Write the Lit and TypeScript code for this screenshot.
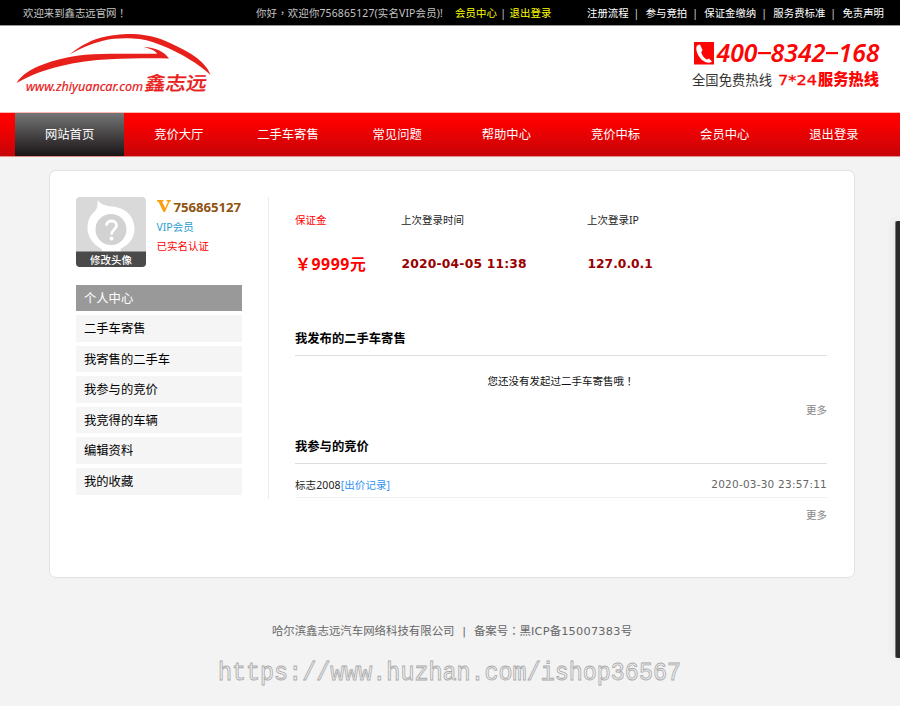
import { LitElement, html, css } from "lit";
import { customElement } from "lit/decorators.js";
import { classMap } from "lit/directives/class-map.js";

const NAV = ["网站首页", "竞价大厅", "二手车寄售", "常见问题", "帮助中心", "竞价中标", "会员中心", "退出登录"];
const MENU = ["二手车寄售", "我寄售的二手车", "我参与的竞价", "我竞得的车辆", "编辑资料", "我的收藏"];
const LINKS = ["注册流程", "参与竞拍", "保证金缴纳", "服务费标准", "免责声明"];

@customElement("site-header")
class SiteHeader extends LitElement {
  static styles = css`
    :host { display: block; }
    .top { height: 25px; background: #000; border-bottom: 1px solid #999; display: flex; align-items: center;
      line-height: 26px; font-size: 10.4px; color: #c4c4c4; white-space: nowrap; padding: 0 16px 0 23px; }
    .hello { width: 233px; }
    .user { width: 199px; letter-spacing: 0.18px; }
    .account { width: 132px; display: flex; color: #ff0; letter-spacing: 0.1px; }
    .sep { color: #ccc; width: 12.6px; text-align: center; }
    .links { display: flex; flex: 1; color: #fff; justify-content: space-between; }
    .links .sep { width: auto; margin-left: 5px; color: #ddd; }
    .brand { height: 86px; background: #fff; display: flex; justify-content: space-between; }
    .brand svg { display: block; }
    .nav { height: 43px; border-top: 1px solid #ffb9b0; border-bottom: 1px solid #e58d8d; display: flex; padding-left: 15px;
      background: linear-gradient(#ff0000 0%, #fb0000 22%, #c60408 100%); }
    .item { width: 109.2px; text-align: center; color: #fff; font-size: 12.3px; line-height: 44px; height: 43px; }
    .on { background: linear-gradient(#757575, #1a1416); }
    .cjk { font-family: "Noto Sans", "Noto Sans CJK SC", sans-serif; }
    .mid { font-family: "Noto Sans CJK TC", sans-serif; line-height: 1; }
  `;
  render() {
    return html`
      <div class="top">
        <div class="hello">欢迎来到鑫志远官网<span class="mid" lang="zh-TW">！</span></div>
        <div class="user">你好<span class="mid" lang="zh-TW">，</span>欢迎你756865127(实名VIP会员)!</div>
        <div class="account"><span>会员中心</span><span class="sep">|</span><span>退出登录</span></div>
        <div class="links">
          ${LINKS.map((l, i) => html`<span>${l}${i < LINKS.length - 1 ? html`<span class="sep">|</span>` : ""}</span>`)}
        </div>
      </div>
      <div class="brand">
        <svg width="240" height="86" viewBox="0 26 240 86">
          <g fill="#e8201c">
            <path d="M69.500 54.500C80 46 90 41 98 38.500C112 34.500 124 33.800 133 34C147 34.500 160 38 170 43C180 47.500 189 52 197 58C203 63 208 68 210.500 75C204 69 198 64.500 190 59.700C181 54 171 49 160 44.700C151 41 142 38.800 133 38.500C122 38 112 38.500 103 40.700C91 43.500 80 48.500 69.500 54.500Z" />
            <path d="M16.500 83C22 74 32 68.500 43 64.500C54 60 65 57.500 77 55.700C88 54.200 99 54 110 53.800L157 53.800C155.500 50.500 150 48.500 143 47C156 47.500 164 51.500 169 58.400C149 58.200 130 58.200 110 59.200C93 60 76 62 60 66.300C44 70 29 76 16.500 83Z" />
            <text class="cjk" x="26" y="91" font-size="12.200" stroke="#e8201c" stroke-width=".2" font-style="italic" textLength="117" lengthAdjust="spacingAndGlyphs">www.zhiyuancar.com</text>
            <text class="cjk" transform="translate(144 90) skewX(-9)" font-size="19" font-weight="500" stroke="#e8201c" stroke-width=".2" textLength="62" lengthAdjust="spacingAndGlyphs">鑫志远</text>
          </g>
        </svg>
        <svg width="220" height="86" viewBox="680 26 220 86">
          <rect x="694" y="42" width="20" height="22.500" fill="#fb0505" />
          <path fill="#fff" d="M697 45.500L700 44.500L702.500 50L701.200 52.500C702.500 56 704 58 706.800 59.500L709 58.500L712 61.500C709 64 705.500 62.500 702 60C697.500 56 695 49 697 45.500Z" />
          <g fill="#fb0505">
            <g class="cjk" font-size="24.500" font-weight="600" font-style="italic">
              <text x="716.500" y="61.800" textLength="41" lengthAdjust="spacingAndGlyphs">400</text>
              <text x="770.500" y="61.800" textLength="55" lengthAdjust="spacingAndGlyphs">8342</text>
              <text x="838.500" y="61.800" textLength="41" lengthAdjust="spacingAndGlyphs">168</text>
            </g>
            <rect x="758" y="52" width="13" height="2.200" />
            <rect x="826" y="52" width="12" height="2.200" />
            <text x="778" y="85" font-family="DejaVu Sans" font-size="13.500" textLength="39" lengthAdjust="spacingAndGlyphs" stroke="#fb0505" stroke-width=".3">7*24</text>
            <text class="cjk" x="818" y="85" font-size="15.500" font-weight="900" textLength="61" lengthAdjust="spacingAndGlyphs">服务热线</text>
          </g>
          <text class="cjk" x="692" y="85" font-size="13.300" fill="#333" textLength="80">全国免费热线</text>
        </svg>
      </div>
      <div class="nav">${NAV.map((n, i) => html`<div class=${classMap({ item: true, on: i === 0 })}>${n}</div>`)}</div>
    `;
  }
}

@customElement("member-side")
class MemberSide extends LitElement {
  static styles = css`
    :host { display: block; width: 192px; height: 302px; border-right: 1px solid #ebebeb; box-sizing: content-box; }
    .profile { display: flex; height: 88px; }
    .avatar { display: block; margin-right: 10px; }
    .info { display: flex; flex-direction: column; white-space: nowrap; font-size: 10.5px; line-height: 19px; padding-left: 0.5px; }
    .name { display: flex; align-items: center; gap: 2px; height: 20px; color: #8f5312; font-size: 13.2px; font-weight: 700; margin-bottom: 1px; }
    .name svg { margin-top: -2px; }
    .name span { letter-spacing: -0.05px; }
    .vip { color: #2aa0d0; }
    .real { color: #f00; }
    .menu { width: 166px; display: flex; flex-direction: column; gap: 4px; font-size: 12.3px; color: #000; }
    .row { height: 26.6px; line-height: 28px; background: #f5f5f5; padding-left: 8px; }
    .head { background: #999; color: #fff; height: 26px; line-height: 27px; }
    .cap { font-family: "Noto Sans", "Noto Sans CJK SC", sans-serif; }
  `;
  render() {
    return html`
      <div class="profile">
        <svg class="avatar" width="70" height="70" viewBox="0 0 70 70">
          <defs><clipPath id="round"><rect width="70" height="70" rx="4" /></clipPath></defs>
          <g clip-path="url(#round)">
            <rect width="70" height="70" fill="#d9d9d9" />
            <path fill="#fff" d="M22 3C25 8 29 8.500 36 9.500C49 10.500 58.500 19 58.500 32C58.500 42 52 48 45 51.500Q43.500 53 46 56H24Q27 53 25 51.500C17 47 11.500 40 11.500 31C11.500 22 15 18 19 14C22 11 21 7 22 3Z" />
            <circle cx="35" cy="32.500" r="15.500" fill="#d2d2d2" />
            <path d="M30.500 28.500C30.500 22.500 40.500 22.500 40.500 28.500C40.500 32.500 35.500 32.500 35.500 37.500" fill="none" stroke="#fff" stroke-width="2.800" />
            <circle cx="35.500" cy="41.500" r="1.900" fill="#fff" />
            <rect y="54.500" width="70" height="15.500" fill="#4a4a4a" />
            <text class="cap" x="14" y="66.500" font-size="10.500" font-weight="500" fill="#fff">修改头像</text>
          </g>
        </svg>
        <div class="info">
          <div class="name">
            <svg width="15" height="12" viewBox="0 0 15 12"><path fill="#f99f0c" d="M0 0H6.500V1.200L5 1.700L8.300 8L11 1.700L9.500 1.200V0H14V1.200L12.500 1.700L8 12H6.500L1.500 1.700L0 1.200Z" /></svg>
            <span>756865127</span>
          </div>
          <div class="vip">VIP会员</div>
          <div class="real">已实名认证</div>
        </div>
      </div>
      <div class="menu">
        <div class="row head">个人中心</div>
        ${MENU.map((m) => html`<div class="row">${m}</div>`)}
      </div>
    `;
  }
}

@customElement("member-main")
class MemberMain extends LitElement {
  static styles = css`
    :host { display: block; width: 532px; margin-left: 26px; font-size: 10.5px; color: #222; }
    .stats { display: grid; grid-template-columns: 106px 186px 1fr; grid-template-rows: 44px 44px; align-items: center; height: 125px; }
    .red { color: #f00; }
    .money { color: #f00; font-size: 15.8px; font-weight: 700; letter-spacing: 0.6px; }
    .value { color: #900; font: bold 12.3px "DejaVu Sans", sans-serif; letter-spacing: 0.2px; padding: 1px 0 0 0.5px; }
    .ip { letter-spacing: 0; }
    .title { height: 33px; line-height: 33px; font-size: 12.3px; font-weight: 700; color: #000; border-bottom: 1px solid #ddd; }
    .empty { height: 50px; line-height: 50px; text-align: center; color: #111; }
    .mid { font-family: "Noto Sans CJK TC", sans-serif; line-height: 1; }
    .more { height: 24px; line-height: 9px; text-align: right; color: #888; }
    .bid { height: 33px; line-height: 42px; border-bottom: 1px solid #f2f2f2; display: flex; justify-content: space-between; }
    .car { letter-spacing: 0.1px; }
    .link { color: #2e94f5; }
    .date { font: 10.5px/40px "DejaVu Sans", sans-serif; color: #666; letter-spacing: 0.22px; }
    .last { line-height: 35px; }
  `;
  render() {
    return html`
      <div class="stats">
        <span class="red">保证金</span><span>上次登录时间</span><span>上次登录IP</span>
        <span class="money">￥9999元</span><span class="value">2020-04-05 11:38</span><span class="value ip">127.0.0.1</span>
      </div>
      <div class="title">我发布的二手车寄售</div>
      <div class="empty">您还没有发起过二手车寄售哦<span class="mid" lang="zh-TW">！</span></div>
      <div class="more">更多</div>
      <div class="title">我参与的竞价</div>
      <div class="bid"><span class="car">标志2008<span class="link">[出价记录]</span></span><span class="date">2020-03-30 23:57:11</span></div>
      <div class="more last">更多</div>
    `;
  }
}

@customElement("app-root")
class AppRoot extends LitElement {
  static styles = css`
    :host { display: block; position: relative; height: 706px; overflow: hidden; background: #f3f3f3;
      font-family: "Noto Sans", "Noto Sans CJK SC", sans-serif; }
    .card { margin: 13px 45px 0 49px; height: 380px; padding-top: 26px; padding-left: 26px; background: #fff;
      border: 1px solid #e2e2e2; border-radius: 7px; display: flex; }
    .foot { padding-top: 42px; text-align: center; font-size: 11.4px; line-height: 22px; height: 22px; color: #666; padding-left: 4px;
      white-space: pre; letter-spacing: 0.02px; }
    .latin { font-family: "DejaVu Sans", sans-serif; font-size: 11.3px; line-height: 1; letter-spacing: 0.25px; }
    .mid { font-family: "Noto Sans CJK TC", sans-serif; line-height: 1; }
    .mark { display: block; margin-top: 5px; }
    .drawer { position: absolute; right: 0; top: 221px; width: 4px; height: 437px; background: #26282a;
      border-left: 1px solid #777; border-radius: 2px 0 0 2px; box-shadow: 0 0 10px rgba(0, 0, 0, 0.12); }
  `;
  render() {
    return html`
      <site-header></site-header>
      <div class="card"><member-side></member-side><member-main></member-main></div>
      <div class="foot">哈尔滨鑫志远汽车网络科技有限公司<span class="latin">  |  </span>备案号<span class="mid" lang="zh-TW">：</span>黑<span class="latin">ICP</span>备<span class="latin">15007383</span>号</div>
      <svg class="mark" width="900" height="50" viewBox="0 646 900 50">
        <text transform="translate(218 679) scale(1 1.120)" font-family="Liberation Mono" font-size="23.400" textLength="463" fill="#f3f3f3" stroke="#aaa" stroke-width=".8">https://www.huzhan.com/ishop36567</text>
      </svg>
      <div class="drawer"></div>
    `;
  }
}
